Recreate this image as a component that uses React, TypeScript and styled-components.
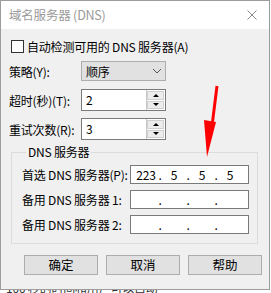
import React from "react";
import styled, { createGlobalStyle } from "styled-components";

const GlobalStyle = createGlobalStyle`
  html, body {
    margin: 0;
    padding: 0;
    background: #ffffff;
  }
  body {
    font-family: "Noto Sans CJK SC", "Noto Sans", sans-serif;
    font-size: 12px;
    letter-spacing: -0.2px;
    color: #000;
  }
`;

const Page = styled.div`
  position: relative;
  width: 271px;
  height: 293px;
  overflow: hidden;
`;

const Window = styled.div`
  width: 268px;
  height: 288px;
  border: 1px solid #9c9c9c;
  display: flex;
  flex-direction: column;
  background: #f0f0f0;
`;

const TitleBar = styled.div`
  height: 28px;
  background: #ffffff;
  display: flex;
  align-items: center;
  justify-content: space-between;
  padding: 0 12px 0 8px;
  color: #9a9a9a;
  font-size: 12.5px;
  line-height: 14px;
`;

const Body = styled.div`
  flex: 1;
  display: flex;
  flex-direction: column;
  padding: 0 0 0 8px;
`;

const CheckRow = styled.label`
  display: flex;
  align-items: center;
  gap: 3px;
  height: 13px;
  margin-top: 11px;
  margin-left: 2px;
  line-height: 13px;
`;

const CheckBox = styled.span`
  width: 11px;
  height: 11px;
  border: 1px solid #333;
  background: #fff;
`;

const FieldRow = styled.div<{ $gap: number; $h: number }>`
  display: flex;
  align-items: center;
  margin-top: ${(p) => p.$gap}px;
  height: ${(p) => p.$h}px;
`;

const Label = styled.span`
  width: 72px;
  white-space: nowrap;
`;

const Select = styled.div`
  box-sizing: border-box;
  width: 85px;
  height: 20px;
  border: 1px solid #adadad;
  background: #e1e1e1;
  display: flex;
  align-items: center;
  justify-content: space-between;
  padding: 0 3px 0 4px;
`;

const Spin = styled.div`
  width: 85px;
  height: 22px;
  box-sizing: border-box;
  border: 1px solid #7a7a7a;
  background: #fff;
  display: flex;
`;

const SpinText = styled.span`
  flex: 1;
  padding-left: 4px;
  line-height: 20px;
`;

const SpinButtons = styled.div`
  width: 17px;
  display: flex;
  flex-direction: column;
  gap: 1px;
  padding: 1px 1px 1px 0;
  border-left: 1px solid #c8c8c8;
  background: #fff;
`;

const SpinBtn = styled.div`
  flex: 1;
  background: #ececec;
  border: 1px solid #cfcfcf;
  display: flex;
  align-items: center;
  justify-content: center;
`;

const Tri = styled.span<{ $up?: boolean }>`
  width: 0;
  height: 0;
  border-left: 3px solid transparent;
  border-right: 3px solid transparent;
  ${(p) =>
    p.$up ? "border-bottom: 3px solid #000;" : "border-top: 3px solid #000;"}
`;

const Group = styled.fieldset`
  margin: 5px 0 0 2px;
  width: 247px;
  box-sizing: border-box;
  border: 1px solid #dcdcdc;
  padding: 6px 0 9px 10px;
  display: flex;
  flex-direction: column;
  gap: 6px;
`;

const Legend = styled.legend`
  padding: 0 2px;
  margin-left: 4px;
  line-height: 14px;
`;

const IpRow = styled.div`
  display: flex;
  align-items: center;
  height: 19px;
`;

const IpLabel = styled.span`
  width: 108px;
  white-space: nowrap;
`;

const IpBox = styled.div`
  width: 119px;
  height: 19px;
  box-sizing: border-box;
  border: 1px solid #7a7a7a;
  background: #fff;
  display: grid;
  grid-template-columns: 22px 6px 22px 6px 22px 6px 22px;
  padding-left: 4px;
  line-height: 17px;
`;

const Seg = styled.span`
  text-align: center;
`;

const Dot = styled.span`
  text-align: center;
`;

const Buttons = styled.div`
  display: flex;
  gap: 8px;
  margin: 11px 0 0 15px;
`;

const Button = styled.button`
  width: 74px;
  height: 20px;
  border: 1px solid #adadad;
  background: #e1e1e1;
  font: inherit;
  font-size: 12.5px;
  padding: 0;
  line-height: 18px;
  color: #000;
`;

const Behind = styled.div`
  height: 5px;
  overflow: hidden;
  padding-left: 6px;
  font-size: 12px;
  line-height: 12px;
  color: #333;
`;

const BehindText = styled.div`
  margin-top: -8px;
  white-space: nowrap;
`;

const Arrow = styled.svg`
  position: absolute;
  left: 0;
  top: 0;
  pointer-events: none;
`;

const Ip = ({ parts }: { parts: string[] }) => (
  <IpBox>
    <Seg>{parts[0]}</Seg>
    <Dot>.</Dot>
    <Seg>{parts[1]}</Seg>
    <Dot>.</Dot>
    <Seg>{parts[2]}</Seg>
    <Dot>.</Dot>
    <Seg>{parts[3]}</Seg>
  </IpBox>
);

const SpinBox = ({ value }: { value: string }) => (
  <Spin>
    <SpinText>{value}</SpinText>
    <SpinButtons>
      <SpinBtn>
        <Tri $up />
      </SpinBtn>
      <SpinBtn>
        <Tri />
      </SpinBtn>
    </SpinButtons>
  </Spin>
);

export default function App() {
  return (
    <Page>
      <GlobalStyle />
      <Window>
        <TitleBar>
          <span>域名服务器 (DNS)</span>
          <svg width="10" height="10" viewBox="0 0 10 10">
            <path d="M0.5 0.5 L9.5 9.5 M9.5 0.5 L0.5 9.5" stroke="#8a8a8a" strokeWidth="1" />
          </svg>
        </TitleBar>
        <Body>
          <CheckRow>
            <CheckBox />
            <span>自动检测可用的 DNS 服务器(A)</span>
          </CheckRow>
          <FieldRow $gap={8} $h={20}>
            <Label>策略(Y):</Label>
            <Select>
              <span>顺序</span>
              <svg width="10" height="6" viewBox="0 0 10 6">
                <path d="M1 1 L5 5 L9 1" fill="none" stroke="#555" strokeWidth="1" />
              </svg>
            </Select>
          </FieldRow>
          <FieldRow $gap={8} $h={22}>
            <Label>超时(秒)(T):</Label>
            <SpinBox value="2" />
          </FieldRow>
          <FieldRow $gap={7} $h={22}>
            <Label>重试次数(R):</Label>
            <SpinBox value="3" />
          </FieldRow>
          <Group>
            <Legend>DNS 服务器</Legend>
            <IpRow>
              <IpLabel>首选 DNS 服务器(P):</IpLabel>
              <Ip parts={["223", "5", "5", "5"]} />
            </IpRow>
            <IpRow>
              <IpLabel>备用 DNS 服务器 1:</IpLabel>
              <Ip parts={["", "", "", ""]} />
            </IpRow>
            <IpRow>
              <IpLabel>备用 DNS 服务器 2:</IpLabel>
              <Ip parts={["", "", "", ""]} />
            </IpRow>
          </Group>
          <Buttons>
            <Button>确定</Button>
            <Button>取消</Button>
            <Button>帮助</Button>
          </Buttons>
        </Body>
      </Window>
      <Behind>
        <BehindText>100 秒的时间和用户可以自动</BehindText>
      </Behind>
      <Arrow width="271" height="293" viewBox="0 0 271 293">
        <path d="M217 86 L212.5 122" stroke="#ff0000" strokeWidth="3" fill="none" />
        <polygon points="204,120 216,122 207,157" fill="#ff0000" />
      </Arrow>
    </Page>
  );
}
